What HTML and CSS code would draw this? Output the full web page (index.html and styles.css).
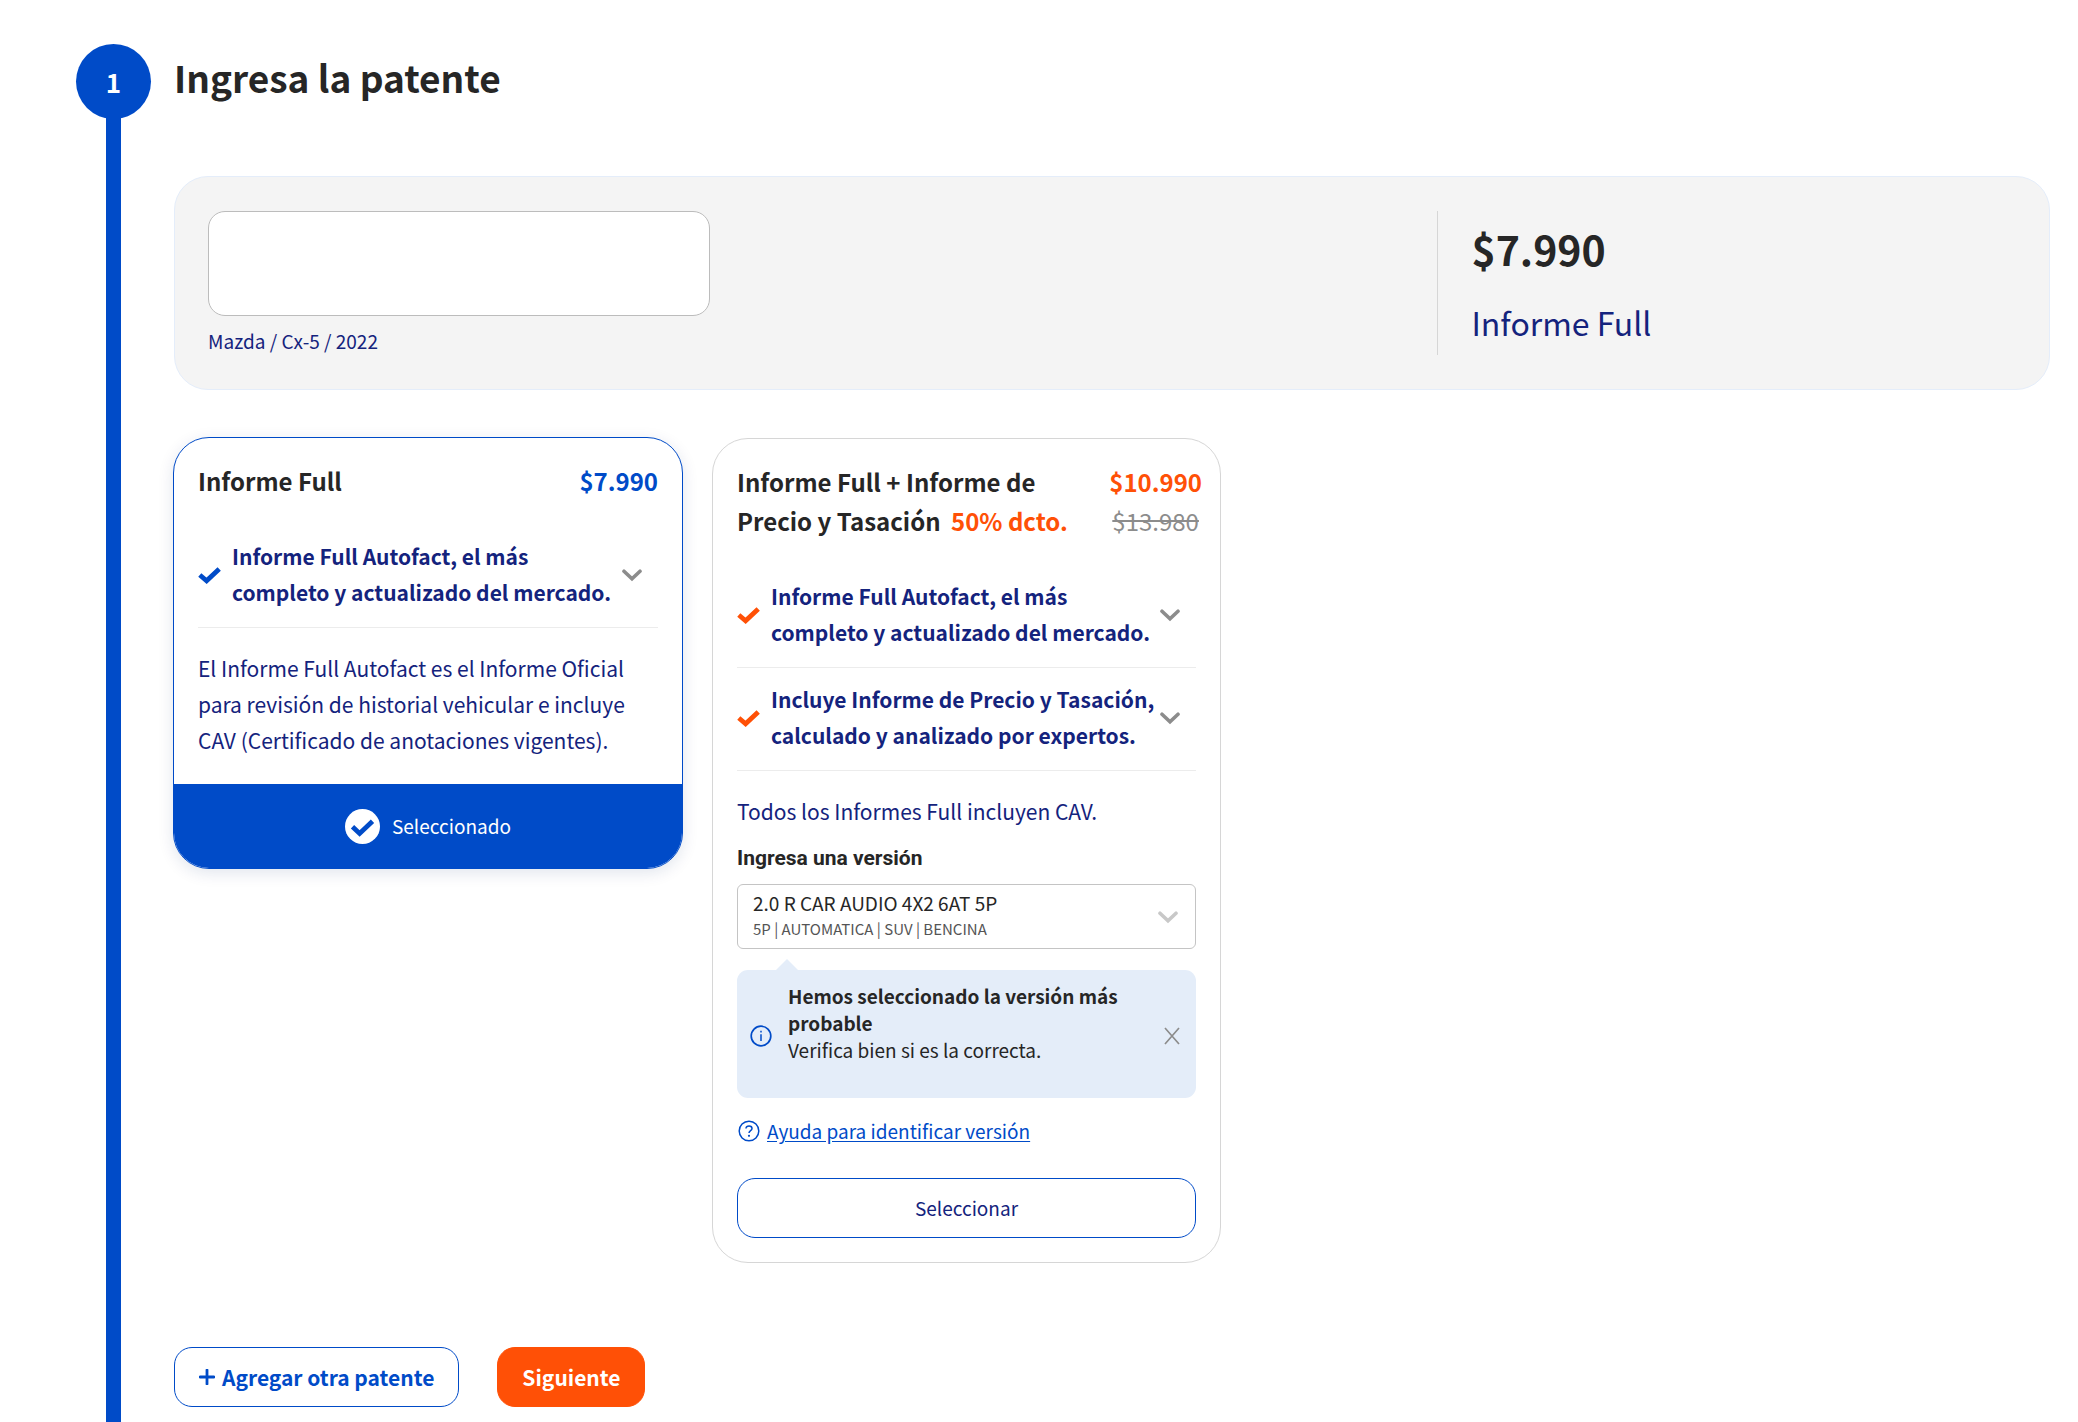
FILE: index.html
```html
<!DOCTYPE html>
<html lang="es">
<head>
  <meta charset="utf-8">
  <meta name="viewport" content="width=device-width, initial-scale=1">
  <title>Ingresa la patente</title>
  <link rel="stylesheet" href="styles.css">
</head>
<body>
  <svg class="sprite" aria-hidden="true">
    <symbol id="check" viewBox="0 0 23 17"><path d="M1.800 8 8.600 13.800 21.200 1.900" fill="none" stroke="currentColor" stroke-width="4.800"/></symbol>
    <symbol id="chevron" viewBox="0 0 20 13"><path d="M2 2.200 10 9.800 18 2.200" fill="none" stroke="currentColor" stroke-width="3.600" stroke-linecap="round"/></symbol>
  </svg>

  <main class="step">
    <div class="rail">
      <span class="rail-number">1</span>
      <span class="rail-line"></span>
    </div>

    <div class="content">
      <h1 class="step-title">Ingresa la patente</h1>

      <section class="summary">
        <div class="summary-plate">
          <input class="plate-input" type="text" aria-label="Patente">
          <p class="plate-model">Mazda / Cx-5 / 2022</p>
        </div>
        <div class="summary-total">
          <p class="total-price">$7.990</p>
          <p class="total-name">Informe Full</p>
        </div>
      </section>

      <section class="cards">
        <article class="card card-selected">
          <div class="card-body">
            <header class="card-head">
              <h2 class="card-title">Informe Full</h2>
              <p class="card-price">$7.990</p>
            </header>
            <ul class="features">
              <li class="feature">
                <svg class="check"><use href="#check"/></svg>
                <span class="feature-text">Informe Full Autofact, el más<br>completo y actualizado del mercado.</span>
                <button class="toggle" type="button" aria-label="Ver detalle"><svg class="chevron"><use href="#chevron"/></svg></button>
              </li>
            </ul>
            <p class="card-note">El Informe Full Autofact es el Informe Oficial para revisión de historial vehicular e incluye CAV (Certificado de anotaciones vigentes).</p>
          </div>
          <button class="selected-bar" type="button">
            <svg class="selected-icon" viewBox="0 0 35 35"><circle cx="17.500" cy="17.500" r="17.500" fill="#fff"/><path d="M7.500 17.800 14.600 24.400 27.500 12.200" fill="none" stroke="#004bc8" stroke-width="4.800"/></svg>
            Seleccionado
          </button>
        </article>

        <article class="card card-offer">
          <div class="card-body">
            <header class="card-head">
              <h2 class="card-title">Informe Full + Informe de<br>Precio y Tasación <span class="discount">50% dcto.</span></h2>
              <p class="card-price">$10.990<br><s class="old-price">$13.980</s></p>
            </header>
            <ul class="features">
              <li class="feature">
                <svg class="check"><use href="#check"/></svg>
                <span class="feature-text">Informe Full Autofact, el más<br>completo y actualizado del mercado.</span>
                <button class="toggle" type="button" aria-label="Ver detalle"><svg class="chevron"><use href="#chevron"/></svg></button>
              </li>
              <li class="feature">
                <svg class="check"><use href="#check"/></svg>
                <span class="feature-text">Incluye Informe de Precio y Tasación,<br>calculado y analizado por expertos.</span>
                <button class="toggle" type="button" aria-label="Ver detalle"><svg class="chevron"><use href="#chevron"/></svg></button>
              </li>
            </ul>
            <p class="card-note">Todos los Informes Full incluyen CAV.</p>

            <label class="version-label" for="version">Ingresa una versión</label>
            <div class="version">
              <select class="version-select" id="version">
                <option>2.0 R CAR AUDIO 4X2 6AT 5P</option>
              </select>
              <span class="version-detail">5P | AUTOMATICA | SUV | BENCINA</span>
              <svg class="chevron version-chevron"><use href="#chevron"/></svg>
            </div>

            <div class="notice">
              <svg class="round-icon" viewBox="0 0 22 22"><circle cx="11" cy="11" r="9.800" fill="none" stroke="currentColor" stroke-width="1.700"/><path d="M11 9.200V16M11 5.800v1.800" stroke="currentColor" stroke-width="1.500"/></svg>
              <p class="notice-text"><strong>Hemos seleccionado la versión más<br>probable</strong><br>Verifica bien si es la correcta.</p>
              <button class="notice-close" type="button" aria-label="Cerrar"><svg class="close-icon" viewBox="0 0 16 18"><path d="M1 1 15 17M15 1 1 17" stroke="currentColor" stroke-width="1.700"/></svg></button>
            </div>

            <div class="help">
              <svg class="round-icon" viewBox="0 0 22 22"><circle cx="11" cy="11" r="9.800" fill="none" stroke="currentColor" stroke-width="1.500"/><path d="M8 8.600C8 6.900 9.300 6 11 6s3 .9 3 2.500c0 2.200-3 2-3 4.500" fill="none" stroke="currentColor" stroke-width="1.500"/><circle cx="11" cy="15.800" r="1.100" fill="currentColor"/></svg>
              <a class="help-link" href="#">Ayuda para identificar versión</a>
            </div>

            <button class="select-button" type="button">Seleccionar</button>
          </div>
        </article>
      </section>

      <div class="actions">
        <button class="action action-add" type="button"><svg class="plus" viewBox="0 0 16 16"><path d="M8 1v14M1 8h14" stroke="currentColor" stroke-width="2.800" stroke-linecap="round"/></svg>Agregar otra patente</button>
        <button class="action action-next" type="button">Siguiente</button>
      </div>
    </div>
  </main>
</body>
</html>
```

FILE: styles.css
```css
:root {
  --blue: #004bc8;
  --navy: #14237d;
  --orange: #ff5006;
  --ink: #262626;
  --gray: #8c8c8c;
}

* {
  box-sizing: border-box;
}

body {
  margin: 0;
  background: #fff;
  color: var(--ink);
  font-family: "Noto Sans CJK SC", "Noto Sans", sans-serif;
  font-size: 19px;
  line-height: 30px;
}

h1, h2, p, ul {
  margin: 0;
  padding: 0;
}

button, input, select {
  font: inherit;
  color: inherit;
}

button {
  padding: 0;
  border: 0;
  background: none;
  cursor: pointer;
}

svg {
  display: block;
  flex: none;
}

.sprite {
  display: none;
}

.step {
  display: grid;
  grid-template-columns: 75px minmax(0, 1fr);
  gap: 23px;
  min-height: 100vh;
  padding: 44px 28px 0 76px;
}

/* Progress rail */
.rail {
  display: flex;
  flex-direction: column;
  align-items: center;
}

.rail-number {
  width: 75px;
  border-radius: 50%;
  background: var(--blue);
  color: #fff;
  font-size: 26px;
  font-weight: 700;
  line-height: 75px;
  text-align: center;
}

.rail-line {
  flex: 1;
  width: 15px;
  margin-top: -2px;
  background: var(--blue);
}

.content {
  padding-bottom: 15px;
}

.step-title {
  font-size: 37px;
  font-weight: 700;
  line-height: 66px;
}

/* Plate and total */
.summary {
  display: flex;
  justify-content: space-between;
  margin-top: 66px;
  padding: 34px 33px;
  border: 1px solid #e4edfa;
  border-radius: 34px;
  background: #f4f4f4;
}

.summary-plate {
  flex: 0 1 502px;
}

.plate-input {
  display: block;
  width: 100%;
  height: 105px;
  padding: 0 24px;
  border: 1px solid #bcbcbc;
  border-radius: 17px;
  background: #fff;
  font-size: 37px;
}

.plate-model {
  margin-top: 11px;
  color: var(--navy);
  line-height: 28px;
}

.summary-total {
  flex: 0 0 32%;
  padding-left: 33px;
  border-left: 1px solid #d6d6d6;
}

.total-price {
  font-size: 41px;
  font-weight: 700;
  line-height: 74px;
}

.total-name {
  margin-top: 17px;
  color: var(--navy);
  font-size: 32px;
  line-height: 40px;
}

/* Report cards */
.cards {
  display: grid;
  grid-template-columns: repeat(2, minmax(0, 509px));
  align-items: start;
  gap: 29px;
  margin-top: 48px;
}

.card {
  overflow: hidden;
  border: 1px solid #d6d6d6;
  border-radius: 36px;
  background: #fff;
}

.card-selected {
  margin: -1px 0 -1px -1px;
  border-color: var(--blue);
  box-shadow: 0 4px 16px rgba(0, 40, 110, 0.12);
}

.card-body {
  padding: 23px 24px 24px;
}

.card-selected .card-body {
  padding-bottom: 26px;
}

.card-head {
  display: flex;
  justify-content: space-between;
  font-size: 24px;
  line-height: 39px;
}

.card-title {
  font-size: 24px;
  font-weight: 700;
  white-space: nowrap;
}

.card-price {
  color: var(--blue);
  font-weight: 700;
  text-align: center;
}

.card-offer .card-price {
  margin-right: -6px;
  color: var(--orange);
}

.discount {
  margin-left: 5px;
  color: var(--orange);
}

.old-price {
  color: var(--gray);
  font-weight: 400;
}

.features {
  margin-top: 25px;
  list-style: none;
}

.feature {
  display: flex;
  align-items: center;
  padding: 13px 16px 17px 0;
  border-bottom: 1px solid #ececec;
}

.check {
  width: 23px;
  height: 17px;
  margin: 2px 11px 0 0;
  color: var(--blue);
}

.card-offer .check {
  color: var(--orange);
}

.feature-text {
  flex: 1;
  color: var(--navy);
  font-size: 21px;
  font-weight: 700;
  line-height: 36px;
  white-space: nowrap;
}

.toggle {
  margin-top: 2px;
}

.chevron {
  width: 20px;
  height: 13px;
  color: var(--gray);
}

.card-note {
  margin-top: 22px;
  color: var(--navy);
  font-size: 21px;
  line-height: 36px;
}

.selected-bar {
  display: flex;
  align-items: center;
  justify-content: center;
  gap: 12px;
  width: 100%;
  height: 84px;
  background: var(--blue);
  color: #fff;
}

.selected-icon {
  width: 35px;
  height: 35px;
}

/* Version picker */
.version-label {
  display: block;
  margin: 16px 0 13px;
  font-family: Roboto, sans-serif;
  font-size: 21px;
  font-weight: 700;
  line-height: 26px;
}

.version {
  position: relative;
}

.version-select {
  display: block;
  width: 100%;
  height: 65px;
  padding: 0 48px 28px 15px;
  border: 1px solid #c4c4c4;
  border-radius: 6px;
  background: #fff;
  appearance: none;
}

.version-detail {
  position: absolute;
  bottom: 8px;
  left: 16px;
  color: #555;
  font-size: 15px;
  line-height: 24px;
  pointer-events: none;
}

.version-chevron {
  position: absolute;
  top: 27px;
  right: 18px;
  color: #c8c8c8;
  pointer-events: none;
}

.notice {
  position: relative;
  display: flex;
  align-items: center;
  margin-top: 21px;
  padding: 0 16px 0 13px;
  border-radius: 11px;
  background: #e4edf9;
}

.notice::before {
  content: "";
  position: absolute;
  top: -11px;
  left: 39px;
  border: 11px solid transparent;
  border-top: 0;
  border-bottom-color: #e4edf9;
}

.round-icon {
  width: 22px;
  height: 22px;
  color: var(--blue);
}

.notice .round-icon,
.notice-close {
  margin-top: 4px;
}

.notice-text {
  flex: 1;
  padding: 12px 24px 35px 16px;
  line-height: 27px;
}

.notice-close {
  color: var(--gray);
}

.close-icon {
  width: 16px;
  height: 18px;
}

.help {
  display: flex;
  align-items: center;
  gap: 7px;
  margin: 18px 0 32px 1px;
}

.help-link {
  color: var(--blue);
  text-underline-offset: 2px;
}

.select-button {
  display: block;
  width: 100%;
  height: 60px;
  border: 1px solid var(--blue);
  border-radius: 18px;
  color: var(--navy);
}

/* Bottom actions */
.actions {
  display: flex;
  gap: 38px;
  margin-top: 84px;
}

.action {
  display: flex;
  align-items: center;
  gap: 7px;
  height: 60px;
  padding: 0 24px;
  border: 1px solid var(--blue);
  border-radius: 18px;
  color: var(--blue);
  font-size: 21px;
  font-weight: 700;
}

.action-next {
  border-color: var(--orange);
  background: var(--orange);
  color: #fff;
}

.plus {
  width: 16px;
  height: 16px;
}
```
